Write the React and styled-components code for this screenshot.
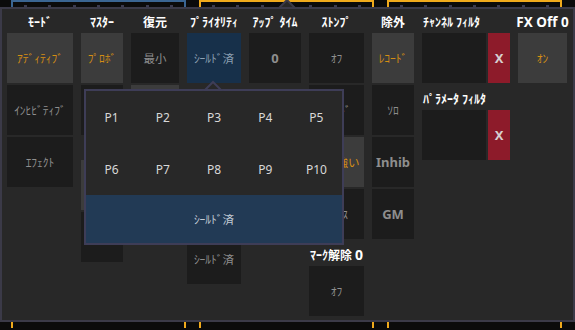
import React from "react";
import styled, { createGlobalStyle } from "styled-components";

const GlobalStyle = createGlobalStyle`
  html, body { margin: 0; padding: 0; background: #0b0b0b; overflow: hidden; }
  body { font-family: "Noto Sans", "Noto Sans CJK JP", sans-serif; }
`;

const Page = styled.div`
  width: 575px;
  height: 330px;
  display: flex;
  flex-direction: column;
  background: #0b0b0b;
`;

const TopStrip = styled.div`
  height: 7px;
  display: flex;
  gap: 13px;
  padding-left: 11px;
`;

const TopBox = styled.div`
  width: 175px;
  height: 7px;
  box-sizing: border-box;
  border: 2px solid ${(p) => p.$color};
  border-bottom: none;
  display: flex;
  justify-content: space-around;
  align-items: flex-end;
`;

const Dot = styled.span`
  width: 3px;
  height: 2px;
  background: #3a3a4e;
`;

const BottomStrip = styled.div`
  height: 8px;
  display: flex;
  gap: 13px;
  padding-left: 11px;
`;

const BottomBox = styled.div`
  width: 175px;
  height: 6px;
  box-sizing: border-box;
  border-left: 2px solid #f0aa1c;
  border-right: 2px solid #f0aa1c;
`;

const Panel = styled.div`
  position: relative;
  height: 315px;
  box-sizing: border-box;
  border: 2px solid #3b3a48;
  background: #282828;
  padding: 0 6px 0 5px;
`;

const Notch = styled.svg`
  position: absolute;
  left: ${(p) => p.$left}px;
  top: ${(p) => p.$top}px;
  overflow: visible;
`;

const Columns = styled.div`
  display: flex;
  gap: 8px;
`;

const Column = styled.div`
  width: ${(p) => p.$w}px;
  display: flex;
  flex-direction: column;
  gap: 2px;
`;

const Header = styled.div`
  height: ${(p) => p.$h || 22}px;
  box-sizing: border-box;
  display: flex;
  align-items: flex-end;
  justify-content: ${(p) => (p.$left ? "flex-start" : "center")};
  padding-bottom: 2px;
  padding-left: ${(p) => (p.$left ? 1 : 0)}px;
  color: #ffffff;
  font-size: 12px;
  line-height: 1;
  font-weight: 700;
  white-space: nowrap;
`;

const Big = styled.span`
  font-family: "Noto Sans", sans-serif;
  font-size: ${(p) => p.$size || 13.5}px;
  font-weight: 700;
`;

const Button = styled.div`
  height: ${(p) => p.$h || 50}px;
  flex: ${(p) => (p.$grow ? 1 : "none")};
  width: ${(p) => (p.$w ? `${p.$w}px` : "auto")};
  display: flex;
  align-items: center;
  justify-content: center;
  background: ${(p) =>
    p.$kind === "active"
      ? "#3c3c3c"
      : p.$kind === "blue"
      ? "#17304a"
      : p.$kind === "red"
      ? "#8d1b2a"
      : "#1c1c1c"};
  color: ${(p) =>
    p.$kind === "active"
      ? "#d38d14"
      : p.$kind === "blue"
      ? "#8da0b3"
      : p.$kind === "red"
      ? "#d6cfcf"
      : "#8e8e8e"};
  font-size: ${(p) => (p.$bold ? 13 : 11.5)}px;
  font-weight: ${(p) => (p.$bold ? 700 : 400)};
  white-space: nowrap;
  overflow: hidden;
`;

const FilterRow = styled.div`
  display: flex;
  gap: 2px;
`;

const Popup = styled.div`
  position: absolute;
  left: 82px;
  top: 80px;
  width: 260px;
  height: 156px;
  box-sizing: border-box;
  border: 2px solid #3e3d57;
  background: #282828;
  display: flex;
  flex-direction: column;
`;

const PGrid = styled.div`
  display: grid;
  grid-template-columns: repeat(5, 1fr);
  grid-auto-rows: 52px;
`;

const PCell = styled.div`
  display: flex;
  align-items: center;
  justify-content: center;
  color: #d8d8d8;
  font-size: 12px;
`;

const Band = styled.div`
  flex: 1;
  display: flex;
  align-items: center;
  justify-content: center;
  background: #223a55;
  color: #c3ccd6;
  font-size: 11.5px;
`;

const Caret = ({ left, top, fill, stroke }) => (
  <Notch $left={left} $top={top} width="16" height="9" viewBox="0 0 16 9">
    <polygon points="0,9 8,1 16,9" fill={fill} stroke={stroke} strokeWidth="2" />
  </Notch>
);

const dots = Array.from({ length: 7 });

export default function App() {
  return (
    <Page>
      <GlobalStyle />
      <TopStrip>
        {["#3a6592", "#f0aa1c", "#f0aa1c"].map((c, i) => (
          <TopBox key={i} $color={c}>
            {dots.map((_, j) => (
              <Dot key={j} />
            ))}
          </TopBox>
        ))}
      </TopStrip>
      <Panel>
        <Caret left={277} top={-10} fill="#282828" stroke="#3b3a48" />
        <Columns>
          <Column $w={66}>
            <Header>ﾓｰﾄﾞ</Header>
            <Button $kind="active">ｱﾃﾞｨﾃｨﾌﾞ</Button>
            <Button>ｲﾝﾋﾋﾞﾃｨﾌﾞ</Button>
            <Button>ｴﾌｪｸﾄ</Button>
          </Column>
          <Column $w={42}>
            <Header>ﾏｽﾀｰ</Header>
            <Button $kind="active">ﾌﾟﾛﾎﾞ</Button>
            <Button />
            <Header $h={21} />
            <Button $kind="active" />
            <Button />
          </Column>
          <Column $w={48}>
            <Header>復元</Header>
            <Button>最小</Button>
            <Button $kind="active" />
            <Button />
          </Column>
          <Column $w={54}>
            <Header>ﾌﾟﾗｲｵﾘﾃｨ</Header>
            <Button $kind="blue">ｼｰﾙﾄﾞ済</Button>
            <Header $h={43} />
            <Button />
            <Button />
            <Button>ｼｰﾙﾄﾞ済</Button>
          </Column>
          <Column $w={52}>
            <Header>ｱｯﾌﾟ ﾀｲﾑ</Header>
            <Button $bold>0</Button>
          </Column>
          <Column $w={55}>
            <Header>ｽﾄﾝﾌﾟ</Header>
            <Button>ｵﾌ</Button>
            <Button>ﾚｺｰﾄﾞ</Button>
            <Button $kind="active">より強い</Button>
            <Button>ﾏｲﾅｽ</Button>
            <Header $h={23}>
              ﾏｰｸ解除&nbsp;<Big $size={14}>0</Big>
            </Header>
            <Button>ｵﾌ</Button>
          </Column>
          <Column $w={42}>
            <Header>除外</Header>
            <Button $kind="active">ﾚｺｰﾄﾞ</Button>
            <Button>ｿﾛ</Button>
            <Button $bold>Inhib</Button>
            <Button $bold>GM</Button>
          </Column>
          <Column $w={88}>
            <Header $left>ﾁｬﾝﾈﾙ ﾌｨﾙﾀ</Header>
            <FilterRow>
              <Button $grow />
              <Button $kind="red" $bold $w={22}>
                X
              </Button>
            </FilterRow>
            <Header $left $h={23}>
              ﾊﾟﾗﾒｰﾀ ﾌｨﾙﾀ
            </Header>
            <FilterRow>
              <Button $grow />
              <Button $kind="red" $bold $w={22}>
                X
              </Button>
            </FilterRow>
          </Column>
          <Column $w={49}>
            <Header>
              <Big>FX Off 0</Big>
            </Header>
            <Button $kind="active">ｵﾝ</Button>
          </Column>
        </Columns>
        <Popup>
          <Caret left={119} top={-10} fill="#282828" stroke="#3e3d57" />
          <PGrid>
            {Array.from({ length: 10 }).map((_, i) => (
              <PCell key={i}>P{i + 1}</PCell>
            ))}
          </PGrid>
          <Band>ｼｰﾙﾄﾞ済</Band>
        </Popup>
      </Panel>
      <BottomStrip>
        <BottomBox />
        <BottomBox />
        <BottomBox />
      </BottomStrip>
    </Page>
  );
}
